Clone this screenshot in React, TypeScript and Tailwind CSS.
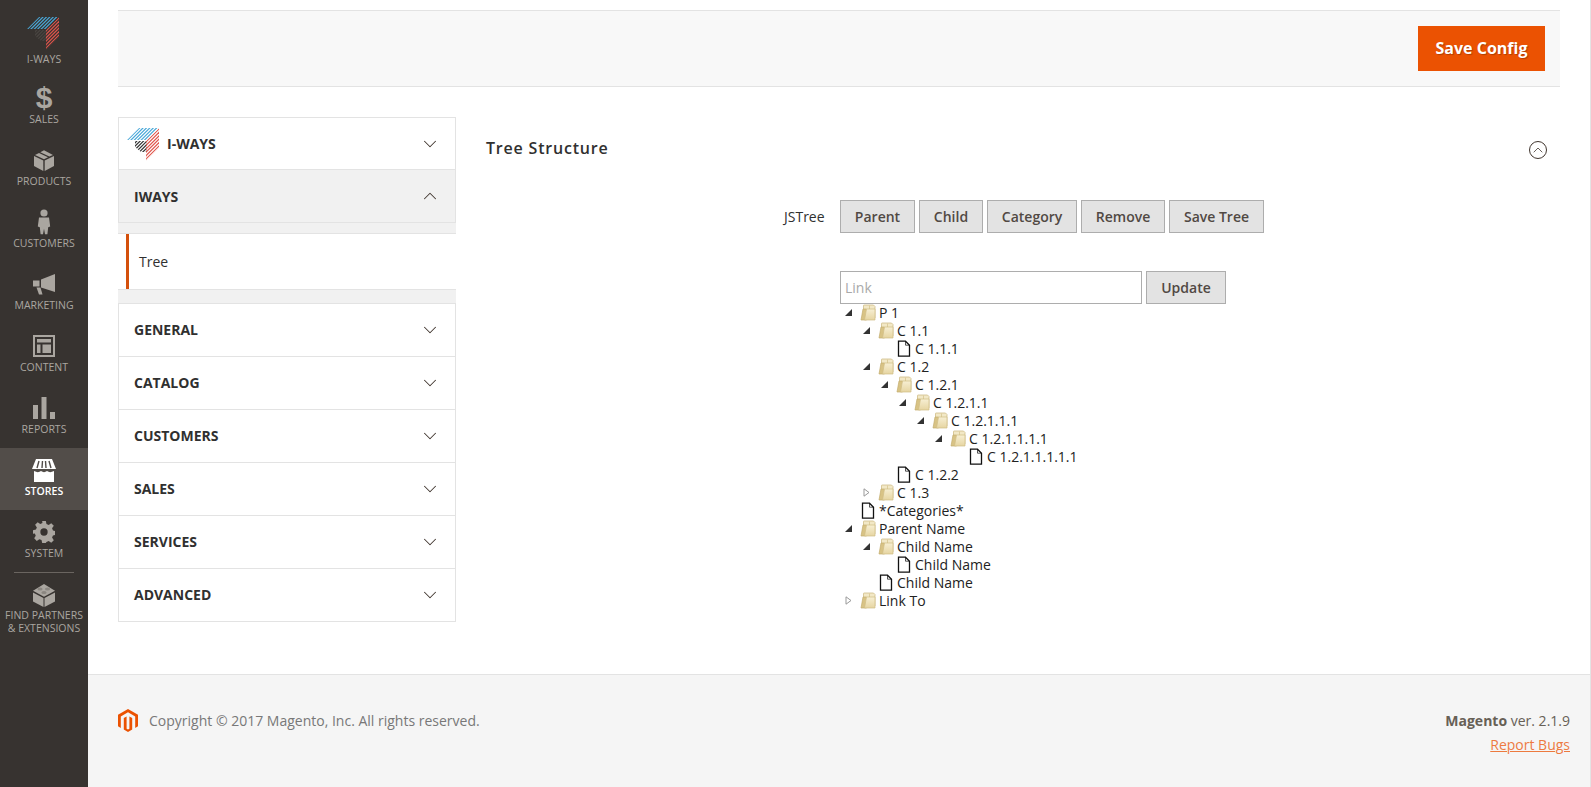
import { ChevronDown, ChevronUp } from 'lucide-react'

const font = "font-['Open_Sans',sans-serif]"

const diagonals = Array.from({ length: 22 }, (_, i) => i * 3.4 + 2)

function IwaysLogo({ black, id }: { black: string; id: string }) {
  return (
    <svg width="36" height="36" viewBox="0 0 36 36" fill="none" strokeWidth="1.2" className="shrink-0">
      <clipPath id={`${id}-blue`}>
        <path d="M1 14L13 2h19L21 14z" />
      </clipPath>
      <clipPath id={`${id}-black`}>
        <path d="M9 15h12v11h-6l-6-5z" />
      </clipPath>
      <clipPath id={`${id}-red`}>
        <path d="M33 2v20L20 35V15z" />
      </clipPath>
      <g clipPath={`url(#${id}-blue)`} stroke="#4aa8d8">
        {diagonals.map((k) => (
          <line key={k} x1={0} y1={k} x2={36} y2={k - 36} />
        ))}
      </g>
      <g clipPath={`url(#${id}-black)`} stroke={black}>
        {diagonals.map((k) => (
          <line key={k} x1={0} y1={k} x2={36} y2={k - 36} />
        ))}
      </g>
      <g clipPath={`url(#${id}-red)`} stroke="#e0554c">
        {diagonals.map((k) => (
          <line key={k} x1={0} y1={k} x2={36} y2={k - 36} />
        ))}
      </g>
    </svg>
  )
}

function Sales() {
  return <span className="font-['Liberation_Sans',sans-serif] text-[30px] leading-[32px] font-bold text-[#aaa6a0]">$</span>
}

function Products() {
  return (
    <svg width="22" height="24" viewBox="0 0 22 24" fill="#aaa6a0">
      <path d="M1 8l9.3 4.6V23L1 18z" />
      <path d="M21 8l-9.3 4.6V23L21 18z" />
      <path d="M11 11.2L2 7l4-2 9 4.3zM16.3 8.5l-9-4.3L11 2.3l9 4.6z" />
    </svg>
  )
}

function Customers() {
  return (
    <svg width="18" height="26" viewBox="0 0 18 26" fill="#aaa6a0">
      <circle cx="9" cy="4" r="3.6" />
      <path d="M4 8.5h10l1.2 9-2 .8-.8 7H10l-1-5.5L8 25.3H5.6l-.8-7-2-.8z" />
    </svg>
  )
}

function Marketing() {
  return (
    <svg width="24" height="24" viewBox="0 0 24 24" fill="#aaa6a0">
      <path d="M23 2v18L9 15.5V7.5z" />
      <path d="M1 8.5h6.5v6H1z" />
      <path d="M4.5 15.5h4l2 7H7z" />
    </svg>
  )
}

function Content() {
  return (
    <svg width="22" height="22" viewBox="0 0 22 22" fill="#aaa6a0">
      <path fillRule="evenodd" d="M0 0h22v22H0zM2 2v18h18V2z" />
      <path d="M4 4h14v3.5H4zM4 9.5h3.5V18H4zM9.5 9.5H18V18H9.5z" />
    </svg>
  )
}

function Reports() {
  return (
    <svg width="22" height="22" viewBox="0 0 22 22" fill="#aaa6a0">
      <path d="M0 8h5v14H0zM8.5 0h5v22h-5zM17 15h5v7h-5z" />
    </svg>
  )
}

function Stores() {
  return (
    <svg width="24" height="23" viewBox="0 0 24 23" fill="#ffffff">
      <path d="M4 0h16l4 10H0z" />
      <path d="M2 12c3 1.5 5 1.5 7 0 2 1.5 4 1.5 6 0 2 1.5 4 1.5 7 0v11H2z" />
      <path d="M7 2L5 9M10.5 2L10 9M13.5 2L14 9M17 2l2 7" stroke="#524d49" strokeWidth="1.4" />
    </svg>
  )
}

function System() {
  return (
    <svg width="22" height="22" viewBox="0 0 24 24" fill="#aaa6a0">
      <path
        fillRule="evenodd"
        d="M10 0h4l.7 3.3 2.4 1 2.8-1.9 2.8 2.8-1.9 2.8 1 2.4 3.2.6v4l-3.2.7-1 2.4 1.900 2.8-2.800 2.800-2.800-1.900-2.400 1L14 24h-4l-.7-3.200-2.400-1-2.800 1.900-2.800-2.800L3 16.100l-1-2.400L0 14v-4l3.200-.6 1-2.400-1.900-2.800 2.800-2.800 2.800 1.900 2.400-1zM12 8a4 4 0 100 8 4 4 0 000-8z"
      />
    </svg>
  )
}

function Partners() {
  return (
    <svg width="24" height="24" viewBox="0 0 24 24" fill="#aaa6a0">
      <path d="M1 9.5l10.5 5.500V24L1 18.500z" />
      <path d="M23 9.5l-10.5 5.500V24L23 18.500z" />
      <path d="M12 1l11 6.800-11 6L1 7.800z" />
      <ellipse cx="8" cy="6" rx="2.6" ry="1.5" fill="#8a8680" />
      <ellipse cx="15.5" cy="6" rx="2.6" ry="1.5" fill="#8a8680" />
      <ellipse cx="12" cy="9.5" rx="2.6" ry="1.5" fill="#8a8680" />
    </svg>
  )
}

function MagentoLogo() {
  return (
    <svg width="20" height="23" viewBox="0 0 20 23" fill="#eb5202">
      <path d="M10 0L0 5.800v11.500l2.800 1.600V7.400L10 3.300l7.200 4.100v11.500l2.800-1.600V5.800z" />
      <path d="M11.400 19.700L10 20.500l-1.400-.8V7.400L5.800 9v11.500L10 23l4.200-2.500V9l-2.800-1.600z" />
    </svg>
  )
}

function FolderIcon() {
  return (
    <svg width="16" height="17" viewBox="0 0 16 17" className="shrink-0">
      <defs>
        <linearGradient id="folderFront" x1="0" y1="0" x2="0" y2="1">
          <stop offset="0" stopColor="#f7efd3" />
          <stop offset="1" stopColor="#e6d5a2" />
        </linearGradient>
      </defs>
      <path d="M3.5 1.500Q3.500 1 4 1h9.500L15 2.500V14H3.500z" fill="#f2e8c6" stroke="#cfbd88" strokeWidth=".8" />
      <path d="M9.500 1.500V5" stroke="#d6c592" strokeWidth=".8" />
      <path d="M3 5h3.500v11H1z" fill="#d8c385" stroke="#c4ae6e" strokeWidth=".7" />
      <path d="M6.500 5H15v11H4.500z" fill="url(#folderFront)" stroke="#d0bd85" strokeWidth=".7" />
    </svg>
  )
}

function FileIcon() {
  return (
    <svg width="16" height="17" viewBox="0 0 16 17" className="shrink-0">
      <path d="M2.500 1.200h7l4 4v11h-11z" fill="#fff" stroke="#111" strokeWidth="1.300" />
      <path d="M9.500 1.200v4h4" fill="none" stroke="#111" strokeWidth=".7" />
    </svg>
  )
}

const navItems = [
  { label: 'I-WAYS', icon: <IwaysLogo black="#4a4642" id="side" />, box: 'h-[34px]', h: 'h-[61px]', pb: 'pb-[10px]' },
  { label: 'SALES', icon: <Sales />, box: 'h-[24px]', h: 'h-[62px]', pb: 'pb-[12px]' },
  { label: 'PRODUCTS', icon: <Products />, box: 'h-[24px]', h: 'h-[62px]', pb: 'pb-[12px]' },
  { label: 'CUSTOMERS', icon: <Customers />, box: 'h-[24px]', h: 'h-[62px]', pb: 'pb-[12px]' },
  { label: 'MARKETING', icon: <Marketing />, box: 'h-[24px]', h: 'h-[62px]', pb: 'pb-[12px]' },
  { label: 'CONTENT', icon: <Content />, box: 'h-[24px]', h: 'h-[62px]', pb: 'pb-[12px]' },
  { label: 'REPORTS', icon: <Reports />, box: 'h-[24px]', h: 'h-[62px]', pb: 'pb-[12px]' },
  { label: 'STORES', icon: <Stores />, box: 'h-[24px]', h: 'h-[62px]', pb: 'pb-[12px]', active: true },
  { label: 'SYSTEM', icon: <System />, box: 'h-[24px]', h: 'h-[62px]', pb: 'pb-[12px]' },
]

type Node = { label: string; depth: number; kind: 'folder' | 'file'; arrow?: 'open' | 'closed' }

const tree: Node[] = [
  { label: 'P 1', depth: 0, kind: 'folder', arrow: 'open' },
  { label: 'C 1.1', depth: 1, kind: 'folder', arrow: 'open' },
  { label: 'C 1.1.1', depth: 2, kind: 'file' },
  { label: 'C 1.2', depth: 1, kind: 'folder', arrow: 'open' },
  { label: 'C 1.2.1', depth: 2, kind: 'folder', arrow: 'open' },
  { label: 'C 1.2.1.1', depth: 3, kind: 'folder', arrow: 'open' },
  { label: 'C 1.2.1.1.1', depth: 4, kind: 'folder', arrow: 'open' },
  { label: 'C 1.2.1.1.1.1', depth: 5, kind: 'folder', arrow: 'open' },
  { label: 'C 1.2.1.1.1.1.1', depth: 6, kind: 'file' },
  { label: 'C 1.2.2', depth: 2, kind: 'file' },
  { label: 'C 1.3', depth: 1, kind: 'folder', arrow: 'closed' },
  { label: '*Categories*', depth: 0, kind: 'file' },
  { label: 'Parent Name', depth: 0, kind: 'folder', arrow: 'open' },
  { label: 'Child Name', depth: 1, kind: 'folder', arrow: 'open' },
  { label: 'Child Name', depth: 2, kind: 'file' },
  { label: 'Child Name', depth: 1, kind: 'file' },
  { label: 'Link To', depth: 0, kind: 'folder', arrow: 'closed' },
]

const indents = ['pl-0', 'pl-[18px]', 'pl-[36px]', 'pl-[54px]', 'pl-[72px]', 'pl-[90px]', 'pl-[108px]']

function TreeRow({ node }: { node: Node }) {
  return (
    <div className={`flex h-[18px] items-center ${indents[node.depth]}`}>
      <span className="mr-[6px] flex w-[12px] shrink-0 items-center justify-center">
        {node.arrow === 'open' && (
          <svg width="7" height="7" viewBox="0 0 7 7">
            <path d="M7 0v7H0z" fill="#333" />
          </svg>
        )}
        {node.arrow === 'closed' && (
          <svg width="7" height="9" viewBox="0 0 7 9">
            <path d="M1 .8l5 3.700-5 3.700z" fill="#fff" stroke="#999" />
          </svg>
        )}
      </span>
      {node.kind === 'folder' ? <FolderIcon /> : <FileIcon />}
      <span className="ml-[3px] text-[14px] whitespace-nowrap text-[#222]">{node.label}</span>
    </div>
  )
}

function GreyButton({ children, width }: { children: string; width: string }) {
  return (
    <button className={`h-[33px] ${width} border border-[#adadad] bg-[#e3e3e3] text-[14px] font-semibold text-[#514943]`}>
      {children}
    </button>
  )
}

function SectionRow({ label }: { label: string }) {
  return (
    <div className="flex h-[53px] items-center justify-between border-b border-[#e3e3e3] pr-[14px] pl-[15px]">
      <span className="mb-[2px] text-[14px] font-bold text-[#303030]">{label}</span>
      <ChevronDown className="h-[22px] w-[22px] text-[#41362f]" strokeWidth={1.1} />
    </div>
  )
}

export default function App() {
  return (
    <div className={`flex h-[787px] w-[1591px] overflow-hidden bg-white ${font}`}>
      <aside className="flex w-[88px] shrink-0 flex-col items-stretch bg-[#373330] pt-[15px]">
        {navItems.map((item) => (
          <div
            key={item.label}
            className={`flex ${item.h} flex-col items-center justify-end ${item.pb} ${item.active ? 'bg-[#524d49]' : ''}`}
          >
            <div className={`flex ${item.box} items-center justify-center`}>{item.icon}</div>
            <span className={`mt-[2px] text-[10.5px] leading-[14px] ${item.active ? 'font-semibold text-white' : 'text-[#aaa6a0]'}`}>
              {item.label}
            </span>
          </div>
        ))}
        <div className="mx-[14px] border-t border-[#6a6560]" />
        <div className="flex flex-col items-center pt-[10px]">
          <Partners />
          <span className="mt-[2px] text-center text-[10.5px] leading-[12.5px] text-[#aaa6a0]">
            FIND PARTNERS
            <br />& EXTENSIONS
          </span>
        </div>
      </aside>

      <div className="flex min-w-0 flex-1 flex-col border-r border-[#e3e3e3]">
        <main className="flex-1 px-[30px] pt-[10px]">
          <div className="flex h-[77px] items-center justify-end border-y border-[#e3e3e3] bg-[#f8f8f8] pr-[15px]">
            <button className="h-[45px] w-[127px] bg-[#eb5202] pb-[2px] text-[16px] font-bold text-white [text-shadow:1px_1px_1px_rgba(0,0,0,0.25)]">
              Save Config
            </button>
          </div>

          <div className="mt-[30px] flex">
            <div className="w-[338px] shrink-0">
              <div className="border border-b-0 border-[#e3e3e3]">
                <div className="flex h-[52px] items-center justify-between border-b border-[#e3e3e3] pr-[14px] pl-[7px]">
                  <div className="flex items-center gap-[5px]">
                    <IwaysLogo black="#333333" id="panel" />
                    <span className="text-[14px] font-bold text-[#303030]">I-WAYS</span>
                  </div>
                  <ChevronDown className="h-[22px] w-[22px] text-[#41362f]" strokeWidth={1.1} />
                </div>
                <div className="flex h-[53px] items-center justify-between border-b border-[#e3e3e3] bg-[#f1f1f1] pr-[14px] pl-[15px]">
                  <span className="text-[14px] font-bold text-[#303030]">IWAYS</span>
                  <ChevronUp className="h-[22px] w-[22px] text-[#41362f]" strokeWidth={1.1} />
                </div>
              </div>
              <div className="flex h-[80px] flex-col bg-[#f1f1f1] pt-[10px] pb-[13px]">
                <div className="flex flex-1 items-center border-y border-[#e3e3e3] bg-white">
                  <span className="ml-[8px] h-full w-[3px] bg-[#d4500c]" />
                  <span className="ml-[10px] text-[14px] text-[#303030]">Tree</span>
                </div>
              </div>
              <div className="border border-b-0 border-[#e3e3e3]">
                {['GENERAL', 'CATALOG', 'CUSTOMERS', 'SALES', 'SERVICES', 'ADVANCED'].map((label) => (
                  <SectionRow key={label} label={label} />
                ))}
              </div>
            </div>

            <section className="min-w-0 flex-1 pl-[30px]">
              <div className="flex h-[62px] items-center justify-between">
                <h2 className="text-[16px] font-semibold tracking-[0.8px] text-[#303030]">Tree Structure</h2>
                <span className="mt-[3px] mr-[13px] flex h-[18px] w-[18px] items-center justify-center rounded-full border border-[#41362f]">
                  <ChevronUp className="h-[16px] w-[16px] text-[#41362f]" strokeWidth={1.2} />
                </span>
              </div>

              <div className="mt-[21px] flex items-center">
                <span className="ml-[298px] w-[56px] text-[14px] font-medium text-[#303030]">JSTree</span>
                <div className="flex gap-[4px]">
                  <GreyButton width="w-[75px]">Parent</GreyButton>
                  <GreyButton width="w-[64px]">Child</GreyButton>
                  <GreyButton width="w-[90px]">Category</GreyButton>
                  <GreyButton width="w-[84px]">Remove</GreyButton>
                  <GreyButton width="w-[95px]">Save Tree</GreyButton>
                </div>
              </div>

              <div className="mt-[38px] ml-[354px]">
                <div className="flex gap-[4px]">
                  <div className="flex h-[33px] w-[302px] items-center border border-[#adadad] bg-white px-[4px] text-[14px] text-[#a9a9a9]">
                    Link
                  </div>
                  <GreyButton width="w-[80px]">Update</GreyButton>
                </div>
                <div className="-mt-[1px] pl-[2px]">
                  {tree.map((node, i) => (
                    <TreeRow key={i} node={node} />
                  ))}
                </div>
              </div>
            </section>
          </div>
        </main>

        <footer className="flex h-[113px] shrink-0 justify-between border-t border-[#e3e3e3] bg-[#f5f5f5] pt-[34px] pr-[20px] pl-[30px]">
          <div className="flex h-[23px] items-center gap-[11px]">
            <MagentoLogo />
            <span className="text-[14px] text-[#787878]">Copyright © 2017 Magento, Inc. All rights reserved.</span>
          </div>
          <div className="text-right text-[14px] text-[#676056]">
            <div className="leading-[23px]">
              <b className="font-bold">Magento</b> ver. 2.1.9
            </div>
            <div className="mt-[1px] leading-[23px] text-[#eb5202] underline opacity-75">Report Bugs</div>
          </div>
        </footer>
      </div>
    </div>
  )
}
